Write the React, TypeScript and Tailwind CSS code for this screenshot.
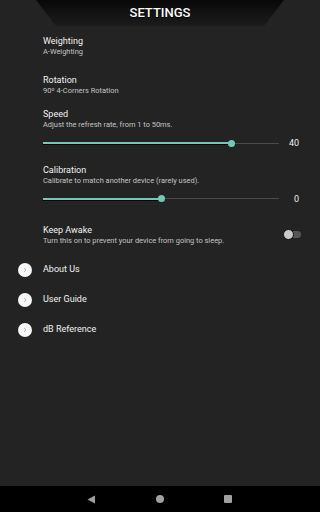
import React from "react";

function Slider({ pct, value }: { pct: number; value: string }) {
  return (
    <div className="flex items-center h-[12px] mt-[7px] pr-[21px]">
      <div className="relative flex-1 h-[12px]">
        <div className="absolute left-0 right-0 top-[5.5px] h-px bg-[#4a4a4a]" />
        <div
          className="absolute left-0 top-[5px] h-[2px] bg-[#6fcabb] shadow-[0_1px_0_#000]"
          style={{ width: `${pct}%` }}
        />
        <div
          className="absolute top-[2.5px] w-[7px] h-[7px] rounded-full bg-[#6fcabb] -ml-[3.5px]"
          style={{ left: `${pct}%` }}
        />
      </div>
      <div className="w-[20px] text-right text-[9px] leading-[12px] text-[#eeeeee]">{value}</div>
    </div>
  );
}

function Title({ children, mt }: { children: React.ReactNode; mt: string }) {
  return <div className={`text-[9px] leading-[11px] text-[#f2f2f2] ${mt}`}>{children}</div>;
}

function Sub({ children }: { children: React.ReactNode }) {
  return <div className="text-[7.45px] leading-[10px] text-[#c4c4c4]">{children}</div>;
}

function LinkRow({ label }: { label: string }) {
  return (
    <div className="flex items-center h-[30px]">
      <div className="w-[14px] h-[14px] rounded-full bg-[#f7f7f7] flex items-center justify-center ml-[18px] mr-[11px]">
        <svg width="6" height="6" viewBox="0 0 6 6">
          <path d="M2.2 1 L4 3 L2.2 5" stroke="#a8a8a8" strokeWidth="0.8" fill="none" />
        </svg>
      </div>
      <div className="text-[9px] text-[#f2f2f2]">{label}</div>
    </div>
  );
}

export default function App() {
  return (
    <div className="w-[320px] h-[512px] flex flex-col overflow-hidden" style={{ fontFamily: "Roboto, 'Liberation Sans', sans-serif" }}>
      <div className="h-[486px] bg-[#232323] flex flex-col">
        <div className="h-[26px] flex justify-center">
          <div className="w-[248px] h-[26px] bg-gradient-to-b from-[#070707] via-[#131313] to-[#1b1b1b] [clip-path:polygon(0_0,100%_0,calc(100%_-_20px)_100%,20px_100%)] flex items-center justify-center">
            <span className="text-[13px] font-medium text-white [text-shadow:0_1px_1px_#000]">SETTINGS</span>
          </div>
        </div>
        <div className="pl-[43px]">
          <Title mt="mt-[10px]">Weighting</Title>
          <Sub>A-Weighting</Sub>
          <Title mt="mt-[17.5px]">Rotation</Title>
          <Sub>90º 4-Corners Rotation</Sub>
          <Title mt="mt-[13.5px]">Speed</Title>
          <Sub>Adjust the refresh rate, from 1 to 50ms.</Sub>
          <Slider pct={80} value="40" />
          <Title mt="mt-[15.5px]">Calibration</Title>
          <Sub>Calibrate to match another device (rarely used).</Sub>
          <Slider pct={50.3} value="0" />
          <div className="flex items-start mt-[20.7px] pr-[19px]">
            <div className="flex-1">
              <Title mt="mt-0">Keep Awake</Title>
              <Sub>Turn this on to prevent your device from going to sleep.</Sub>
            </div>
            <div className="relative w-[18px] h-[11px] mt-[3.5px]">
              <div className="absolute left-[3px] right-0 top-[2px] h-[7px] rounded-full bg-[#555555]" />
              <div className="absolute left-0 top-0 w-[11px] h-[11px] rounded-full bg-[#c9c9c9] border border-[#111]" />
            </div>
          </div>
        </div>
        <div className="mt-[8.5px]">
          <LinkRow label="About Us" />
          <LinkRow label="User Guide" />
          <LinkRow label="dB Reference" />
        </div>
      </div>
      <div className="h-[26px] bg-black flex items-center justify-center">
        <div className="flex items-center gap-[60px]">
          <svg width="9" height="9" viewBox="0 0 9 9" className="-ml-[1px]">
            <path d="M0.5 4.5 L8 0.5 L8 8.5 Z" fill="#a0a0a0" />
          </svg>
          <div className="w-[8px] h-[8px] rounded-full bg-[#a0a0a0]" />
          <div className="w-[8px] h-[8px] rounded-[1px] bg-[#a0a0a0]" />
        </div>
      </div>
    </div>
  );
}
